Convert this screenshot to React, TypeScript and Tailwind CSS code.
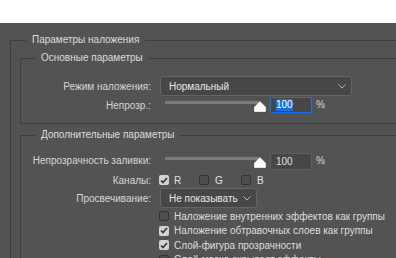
import React from "react";

const font = { fontFamily: '"Liberation Sans", Arial, sans-serif' };

function Chevron() {
  return (
    <svg width="8" height="5" viewBox="0 0 8 5" className="shrink-0">
      <path d="M0.5 0.5 L4 4 L7.5 0.5" fill="none" stroke="#b5b5b5" strokeWidth="1" />
    </svg>
  );
}

function Select({ value, width }: { value: string; width: string }) {
  return (
    <div
      className={`${width} h-[20px] flex items-center justify-between pl-[8px] pr-[5px] rounded-[3px] border border-[#646464] bg-[#474747] text-[#e8e8e8] whitespace-nowrap`}
    >
      <span>{value}</span>
      <Chevron />
    </div>
  );
}

function Check({ on }: { on?: boolean }) {
  return on ? (
    <span className="w-[10px] h-[10px] rounded-[2px] bg-[#d2d2d2] flex items-center justify-center shrink-0">
      <svg width="8" height="7" viewBox="0 0 8 7">
        <path d="M1 3.5 L3 5.5 L7 1" fill="none" stroke="#353535" strokeWidth="1.6" />
      </svg>
    </span>
  ) : (
    <span className="w-[10px] h-[10px] rounded-[2px] border border-[#343434] bg-[#4d4d4d] shrink-0" />
  );
}

function Slider({ focused }: { focused?: boolean }) {
  return (
    <div className="flex items-start h-[16px]">
      <div className="relative w-[110px] h-full">
        <div className="ml-[5px] mt-[4px] h-[3px] w-[94px] bg-[#7b7b7b]" />
        <svg width="12" height="11" viewBox="0 0 12 11" className="absolute left-[94px] top-[4px]">
          <path d="M6 0.7 L11.3 6 V10.3 H0.7 V6 Z" fill="#ffffff" stroke="#ffffff" strokeLinejoin="round" strokeWidth="1" />
        </svg>
      </div>
      {focused ? (
        <div className="w-[42px] h-[16px] border border-[#1473e6] bg-[#464646] flex items-center pl-[5px]">
          <span className="bg-[#1a6fdb] text-white leading-[12px]">100</span>
        </div>
      ) : (
        <div className="w-[42px] h-[17px] border border-[#5e5e5e] bg-[#464646] flex items-center pl-[5px] text-[#e0e0e0]">
          100
        </div>
      )}
      <span className="ml-[4px] leading-[16px] text-[#d8d8d8]">%</span>
    </div>
  );
}

function Row({ label, children, h }: { label: string; children: React.ReactNode; h: string }) {
  return (
    <div className={`flex items-center gap-[9px] ${h}`}>
      <span className="w-[130px] text-right text-[#d6d6d6] whitespace-nowrap">{label}</span>
      {children}
    </div>
  );
}

function Group({ title, children, body }: { title: string; children: React.ReactNode; body: string }) {
  return (
    <fieldset className="border border-[#3e3e3e]">
      <legend className="ml-[14px] px-[6px] leading-[14px] text-[#dcdcdc]">{title}</legend>
      <div className={body}>{children}</div>
    </fieldset>
  );
}

export default function App() {
  return (
    <div className="w-[396px] h-[258px] overflow-hidden bg-white text-[10px]" style={font}>
      <div className="h-[23px]" />
      <div className="h-[235px] overflow-hidden bg-[#535353] pt-[10px] pl-[10px]">
        <fieldset className="w-[440px] border border-[#3e3e3e]">
          <legend className="ml-[15px] px-[6px] leading-[14px] text-[#dcdcdc]">Параметры наложения</legend>
          <div className="flex flex-col gap-[4px] pt-[4px] pl-[9px]">
            <Group title="Основные параметры" body="flex flex-col gap-[1px] pt-[11px] pb-[10px]">
              <Row label="Режим наложения:" h="h-[20px]">
                <Select value="Нормальный" width="w-[192px]" />
              </Row>
              <Row label="Непрозр.:" h="h-[16px]">
                <Slider focused />
              </Row>
            </Group>
            <Group title="Дополнительные параметры" body="flex flex-col pt-[10px] pb-[10px]">
              <Row label="Непрозрачность заливки:" h="h-[17px]">
                <Slider />
              </Row>
              <div className="h-[3px]" />
              <div className="flex items-center gap-[8px] h-[16px]">
                <span className="w-[130px] text-right text-[#d6d6d6]">Каналы:</span>
                <div className="flex items-center text-[#e0e0e0]">
                  <div className="w-[40px] flex items-center gap-[5px]">
                    <Check on />
                    <span>R</span>
                  </div>
                  <div className="w-[42px] flex items-center gap-[6px]">
                    <Check />
                    <span>G</span>
                  </div>
                  <div className="flex items-center gap-[6px]">
                    <Check />
                    <span>B</span>
                  </div>
                </div>
              </div>
              <Row label="Просвечивание:" h="h-[20px]">
                <Select value="Не показывать" width="w-[97px]" />
              </Row>
              <div className="h-[1px]" />
              {[
                { t: "Наложение внутренних эффектов как группы", on: false },
                { t: "Наложение обтравочных слоев как группы", on: true },
                { t: "Слой-фигура прозрачности", on: true },
                { t: "Слой-маска скрывает эффекты", on: false },
              ].map((r) => (
                <div key={r.t} className="flex items-center gap-[5px] h-[14.5px] pl-[138px] text-[#dedede] whitespace-nowrap">
                  <Check on={r.on} />
                  <span>{r.t}</span>
                </div>
              ))}
            </Group>
          </div>
        </fieldset>
      </div>
    </div>
  );
}
